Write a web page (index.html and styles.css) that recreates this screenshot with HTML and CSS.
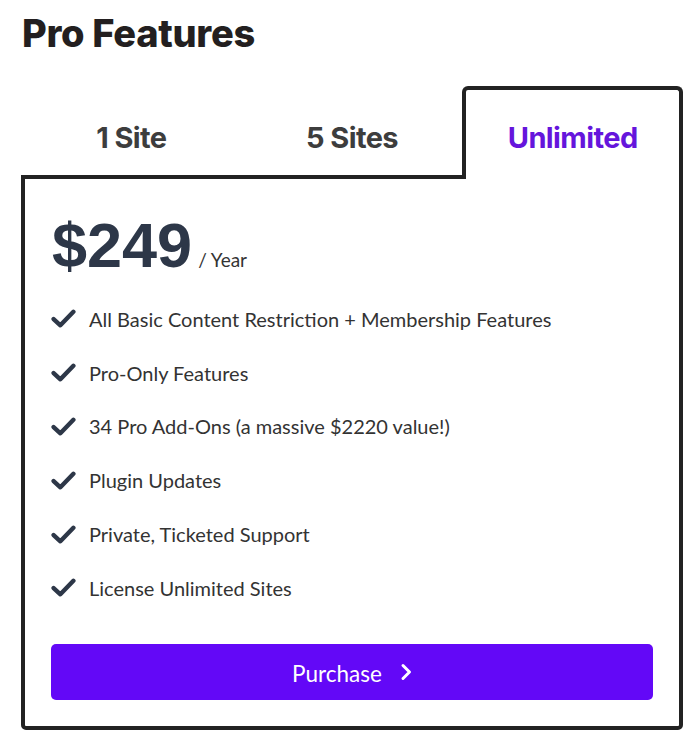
FILE: index.html
```html
<!DOCTYPE html>
<html>
<head>
<meta charset="utf-8">
<link rel="stylesheet" href="styles.css">
</head>
<body>
<h1 class="title">Pro Features</h1>
<div class="pricing">
  <div class="tabs">
    <div class="tab">1 Site</div>
    <div class="tab">5 Sites</div>
    <div class="tab active">Unlimited</div>
  </div>
  <div class="card">
    <div class="price"><span class="amount">$249</span><span class="period">/ Year</span></div>
    <ul class="features">
      <li><svg class="check" viewBox="0 0 24 20"><path d="M2.5 10.5 L9 16.5 L21.5 3.5" fill="none" stroke="currentColor" stroke-width="4.2" stroke-linecap="round" stroke-linejoin="round"/></svg>All Basic Content Restriction + Membership Features</li>
      <li><svg class="check" viewBox="0 0 24 20"><path d="M2.5 10.5 L9 16.5 L21.5 3.5" fill="none" stroke="currentColor" stroke-width="4.2" stroke-linecap="round" stroke-linejoin="round"/></svg>Pro-Only Features</li>
      <li><svg class="check" viewBox="0 0 24 20"><path d="M2.5 10.5 L9 16.5 L21.5 3.5" fill="none" stroke="currentColor" stroke-width="4.2" stroke-linecap="round" stroke-linejoin="round"/></svg>34 Pro Add-Ons (a massive $2220 value!)</li>
      <li><svg class="check" viewBox="0 0 24 20"><path d="M2.5 10.5 L9 16.5 L21.5 3.5" fill="none" stroke="currentColor" stroke-width="4.2" stroke-linecap="round" stroke-linejoin="round"/></svg>Plugin Updates</li>
      <li><svg class="check" viewBox="0 0 24 20"><path d="M2.5 10.5 L9 16.5 L21.5 3.5" fill="none" stroke="currentColor" stroke-width="4.2" stroke-linecap="round" stroke-linejoin="round"/></svg>Private, Ticketed Support</li>
      <li><svg class="check" viewBox="0 0 24 20"><path d="M2.5 10.5 L9 16.5 L21.5 3.5" fill="none" stroke="currentColor" stroke-width="4.2" stroke-linecap="round" stroke-linejoin="round"/></svg>License Unlimited Sites</li>
    </ul>
    <a class="buy" href="#">Purchase<svg class="chev" viewBox="0 0 12 18"><path d="M3 2.5 L9.5 9 L3 15.5" fill="none" stroke="currentColor" stroke-width="3" stroke-linecap="round" stroke-linejoin="round"/></svg></a>
  </div>
</div>
</body>
</html>
```

FILE: styles.css
```css
html, body {
  margin: 0;
  padding: 0;
  background: #ffffff;
}
body {
  padding: 12px 15px 0 21px;
  font-family: "Lato", "Liberation Sans", sans-serif;
}
.title {
  margin: 0 0 0 1px;
  font-family: "Inter", "Liberation Sans", sans-serif;
  font-weight: 800;
  font-size: 38px;
  line-height: 42px;
  color: #231f20;
  letter-spacing: -0.3px;
}
.pricing {
  margin-top: 32px;
  width: 662px;
}
.tabs {
  display: flex;
  position: relative;
  z-index: 1;
  margin-bottom: -4px;
}
.tab {
  flex: 1 1 0;
  height: 83px;
  padding-top: 6px;
  display: flex;
  align-items: center;
  justify-content: center;
  font-family: "Inter", "Liberation Sans", sans-serif;
  font-weight: 700;
  font-size: 29px;
  letter-spacing: -0.6px;
  color: #3d3d3d;
  box-sizing: content-box;
  border: 4px solid transparent;
  border-bottom: 0;
}
.tab.active {
  border-color: #222222;
  border-radius: 6px 6px 0 0;
  background: #ffffff;
  color: #6515dc;
}
.card {
  border: 4px solid #222222;
  border-radius: 0 0 5px 5px;
  padding: 35px 26px 26px 26px;
}
.price {
  display: flex;
  align-items: baseline;
  color: #2d3748;
}
.amount {
  font-family: "Liberation Sans", sans-serif;
  font-weight: 700;
  font-size: 63px;
  line-height: 62px;
  margin-left: 1px;
}
.period {
  font-size: 19px;
  color: #333333;
  margin-left: 6px;
}
.features {
  list-style: none;
  margin: 16px 0 0 0;
  padding: 0;
}
.features li {
  display: flex;
  align-items: center;
  height: 53.8px;
  font-size: 20px;
  color: #333333;
}
.check {
  width: 25px;
  height: 21px;
  color: #2d3748;
  margin-right: 13px;
  flex: none;
}
.buy {
  display: flex;
  align-items: center;
  justify-content: center;
  box-sizing: border-box;
  margin-top: 29px;
  height: 56px;
  padding-top: 3px;
  border-radius: 5px;
  background: #6308f7;
  color: #ffffff;
  text-decoration: none;
  font-size: 22.5px;
}
.chev {
  width: 12px;
  height: 18px;
  margin-left: 18px;
  margin-top: -2px;
}
```
